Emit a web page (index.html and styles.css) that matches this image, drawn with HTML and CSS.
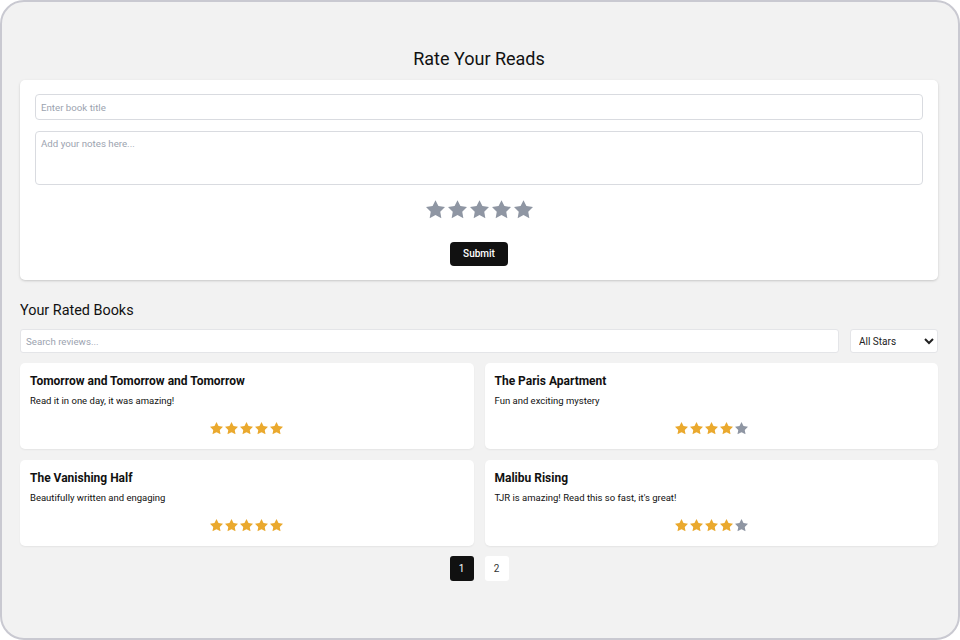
FILE: index.html
```html
<!DOCTYPE html>
<html lang="en">
<head>
<meta charset="utf-8">
<title>Rate Your Reads</title>
<link rel="stylesheet" href="styles.css">
</head>
<body>
<svg width="0" height="0" style="position:absolute">
  <defs>
    <symbol id="star" viewBox="2 2 20 19.2">
      <path d="M12 2l3.09 6.26L22 9.27l-5 4.87 1.18 6.88L12 17.77l-6.18 3.25L7 14.14 2 9.27l6.91-1.01L12 2z"/>
    </symbol>
  </defs>
</svg>
<div class="frame">
  <main class="app">
    <h1 class="title">Rate Your Reads</h1>
    <form class="form-card">
      <input class="field" type="text" placeholder="Enter book title">
      <textarea class="field notes" placeholder="Add your notes here..."></textarea>
      <div class="stars stars-lg">
        <svg class="star off"><use href="#star"/></svg>
        <svg class="star off"><use href="#star"/></svg>
        <svg class="star off"><use href="#star"/></svg>
        <svg class="star off"><use href="#star"/></svg>
        <svg class="star off"><use href="#star"/></svg>
      </div>
      <button class="submit" type="button">Submit</button>
    </form>

    <h2 class="subtitle">Your Rated Books</h2>
    <div class="toolbar">
      <input class="search" type="text" placeholder="Search reviews...">
      <select class="filter">
        <option>All Stars</option>
      </select>
    </div>

    <div class="grid">
      <div class="card">
        <h3 class="card-title">Tomorrow and Tomorrow and Tomorrow</h3>
        <p class="card-text">Read it in one day, it was amazing!</p>
        <div class="stars stars-sm">
          <svg class="star on"><use href="#star"/></svg>
          <svg class="star on"><use href="#star"/></svg>
          <svg class="star on"><use href="#star"/></svg>
          <svg class="star on"><use href="#star"/></svg>
          <svg class="star on"><use href="#star"/></svg>
        </div>
      </div>
      <div class="card">
        <h3 class="card-title">The Paris Apartment</h3>
        <p class="card-text">Fun and exciting mystery</p>
        <div class="stars stars-sm">
          <svg class="star on"><use href="#star"/></svg>
          <svg class="star on"><use href="#star"/></svg>
          <svg class="star on"><use href="#star"/></svg>
          <svg class="star on"><use href="#star"/></svg>
          <svg class="star off"><use href="#star"/></svg>
        </div>
      </div>
      <div class="card">
        <h3 class="card-title">The Vanishing Half</h3>
        <p class="card-text">Beautifully written and engaging</p>
        <div class="stars stars-sm">
          <svg class="star on"><use href="#star"/></svg>
          <svg class="star on"><use href="#star"/></svg>
          <svg class="star on"><use href="#star"/></svg>
          <svg class="star on"><use href="#star"/></svg>
          <svg class="star on"><use href="#star"/></svg>
        </div>
      </div>
      <div class="card">
        <h3 class="card-title">Malibu Rising</h3>
        <p class="card-text">TJR is amazing! Read this so fast, it's great!</p>
        <div class="stars stars-sm">
          <svg class="star on"><use href="#star"/></svg>
          <svg class="star on"><use href="#star"/></svg>
          <svg class="star on"><use href="#star"/></svg>
          <svg class="star on"><use href="#star"/></svg>
          <svg class="star off"><use href="#star"/></svg>
        </div>
      </div>
    </div>

    <nav class="pager">
      <button class="page active" type="button">1</button>
      <button class="page" type="button">2</button>
    </nav>
  </main>
</div>
</body>
</html>
```

FILE: styles.css
```css
* { box-sizing: border-box; }

html, body {
  margin: 0;
  padding: 0;
  background: #ffffff;
}

body {
  font-family: Roboto, "Liberation Sans", Arial, sans-serif;
  color: #111111;
}

.frame {
  width: 960px;
  height: 640px;
  background: #f2f2f2;
  border: 2px solid #c9c9d1;
  border-radius: 24px;
  overflow: hidden;
}

.app {
  padding: 46px 20px 0 18px;
  display: flex;
  flex-direction: column;
}

.title {
  margin: 0 0 10px;
  font-size: 18px;
  line-height: 22px;
  font-weight: 400;
  text-align: center;
  color: #111;
}

.form-card {
  background: #fff;
  border-radius: 5px;
  box-shadow: 0 1px 3px rgba(0,0,0,0.12), 0 1px 2px rgba(0,0,0,0.06);
  padding: 14px 15px 14px;
  display: flex;
  flex-direction: column;
  align-items: center;
  height: 200px;
}

.field {
  width: 100%;
  font-family: inherit;
  font-size: 9.7px;
  color: #111;
  background: #fff;
  border: 1px solid #d9dbe0;
  border-radius: 4px;
  padding: 0 5px;
  height: 26px;
  outline: none;
}

.field::placeholder,
.search::placeholder { color: #9ca3af; }

.notes {
  margin-top: 11px;
  height: 54px;
  padding: 5px 5px;
  resize: none;
  line-height: 13px;
}

.stars {
  display: flex;
  justify-content: center;
}

.stars-lg {
  margin-top: 15px;
  gap: 3px;
}

.stars-lg .star {
  width: 19px;
  height: 18.5px;
}

.stars-sm {
  margin-top: 13px;
  gap: 2px;
}

.stars-sm .star {
  width: 13px;
  height: 12.5px;
}

.star { display: block; }
.star.on { fill: #eaa92e; }
.star.off { fill: #8f96a3; }

.submit {
  margin-top: 23px;
  width: 58px;
  height: 24px;
  border: none;
  border-radius: 4px;
  background: #111111;
  color: #fff;
  font-family: inherit;
  font-size: 10px;
  font-weight: 500;
  padding: 0;
}

.subtitle {
  margin: 21px 0 8px;
  font-size: 14.4px;
  line-height: 20px;
  font-weight: 400;
  color: #111;
}

.toolbar {
  display: flex;
  gap: 11px;
}

.search {
  flex: 1;
  height: 24px;
  font-family: inherit;
  font-size: 9.7px;
  border: 1px solid #e4e5e8;
  border-radius: 3px;
  background: #fff;
  padding: 0 5px;
  outline: none;
}

.filter {
  width: 88px;
  height: 24px;
  font-family: inherit;
  font-size: 10px;
  color: #222;
  border: 1px solid #e4e5e8;
  border-radius: 3px;
  background: #fff;
  padding: 0 4px;
}

.grid {
  margin-top: 10px;
  display: grid;
  grid-template-columns: 1fr 1fr;
  gap: 11px;
}

.card {
  background: #fff;
  border-radius: 5px;
  box-shadow: 0 1px 2px rgba(0,0,0,0.06);
  padding: 11px 10px 13px;
  height: 86px;
}

.card-title {
  margin: 0;
  font-size: 12px;
  line-height: 15px;
  font-weight: 700;
  color: #111;
}

.card-text {
  margin: 4px 0 0;
  font-size: 9.5px;
  line-height: 16px;
  color: #111;
}

.pager {
  margin-top: 10px;
  display: flex;
  justify-content: center;
  gap: 11px;
}

.page {
  width: 24px;
  height: 25px;
  border: none;
  border-radius: 3px;
  background: #fff;
  color: #333;
  font-family: inherit;
  font-size: 10px;
  padding: 0;
}

.page.active {
  background: #111;
  color: #fff;
}
```
